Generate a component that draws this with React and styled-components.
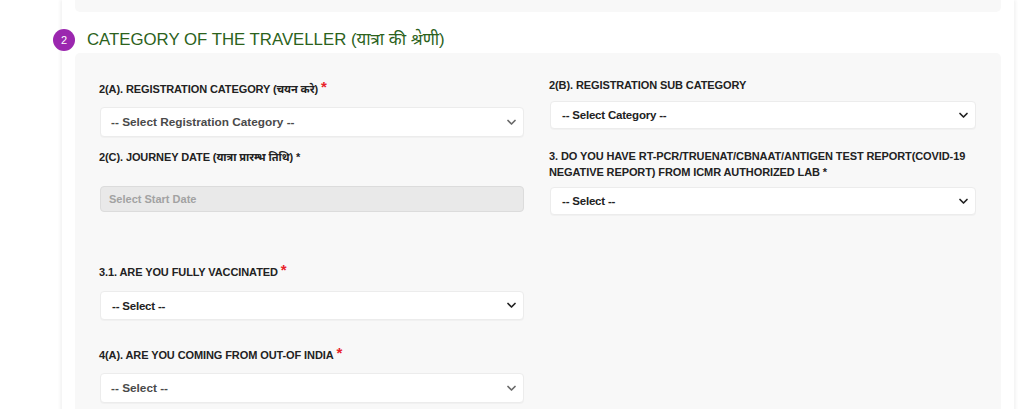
import React from "react";
import styled, { createGlobalStyle } from "styled-components";

const GlobalStyle = createGlobalStyle`
  html, body {
    margin: 0;
    padding: 0;
    background: #ffffff;
    font-family: "Liberation Sans", Arial, "Noto Sans", sans-serif;
  }
`;

const Page = styled.div`
  width: 1024px;
  height: 409px;
  overflow: hidden;
  background: #ffffff;
`;

const Container = styled.div`
  margin-left: 62px;
  width: 952px;
  min-height: 409px;
  padding: 0 13px;
  box-sizing: border-box;
  background: #ffffff;
  box-shadow: -2px 0 3px rgba(0, 0, 0, 0.05), 2px 0 3px rgba(0, 0, 0, 0.05);
`;

const TopPanel = styled.div`
  height: 12px;
  background: #f8f8f8;
  border-radius: 0 0 5px 5px;
`;

const Heading = styled.div`
  display: flex;
  align-items: center;
  gap: 12px;
  margin: 17px 0 0 -22px;
  height: 22px;
`;

const StepBadge = styled.span`
  width: 22px;
  height: 22px;
  border-radius: 50%;
  background: #9b27af;
  color: #ffffff;
  font-size: 11px;
  display: flex;
  align-items: center;
  justify-content: center;
`;

const Title = styled.h2`
  margin: 0;
  font-size: 16.8px;
  font-weight: normal;
  color: #2c621c;
  line-height: 22px;
`;

const Panel = styled.div`
  margin-top: 2px;
  background: #f8f8f8;
  border-radius: 5px 5px 0 0;
  min-height: 360px;
  padding: 0 25px 0 25px;
  display: grid;
  grid-template-columns: 424px 426px;
  column-gap: 26px;
  align-items: start;
`;

const Column = styled.div`
  display: flex;
  flex-direction: column;
`;

const Label = styled.label`
  display: block;
  margin-top: ${(p) => p.$top}px;
  margin-left: -1px;
  font-size: 11px;
  font-weight: bold;
  line-height: 16px;
  color: #222222;
  text-transform: uppercase;
  letter-spacing: -0.1px;
`;

const Required = styled.span`
  color: #e8232a;
  font-size: 15px;
  line-height: 10px;
  margin-left: 3px;
  vertical-align: 1px;
`;

const SelectBox = styled.div`
  margin-top: ${(p) => p.$top}px;
  height: ${(p) => p.$height}px;
  box-sizing: border-box;
  display: flex;
  align-items: center;
  justify-content: space-between;
  padding: 0 4px 0 ${(p) => (p.$muted ? 10 : 11)}px;
  background: #ffffff;
  border: 1px solid #ececec;
  border-radius: 4px;
  box-shadow: 0 1px 1px rgba(0, 0, 0, 0.03);
  color: ${(p) => (p.$muted ? "#4a4a4a" : "#222222")};
  font-size: ${(p) => (p.$muted ? 11.8 : 11.5)}px;
  font-weight: bold;
  letter-spacing: ${(p) => (p.$muted ? "0" : "-0.2px")};
`;

const DateInput = styled.div`
  margin-top: ${(p) => p.$top}px;
  height: 26px;
  box-sizing: border-box;
  display: flex;
  align-items: center;
  padding: 0 8px;
  background: #e9e9e9;
  border: 1px solid #dcdcdc;
  border-radius: 4px;
  color: #a2a2a2;
  font-size: 11px;
  font-weight: bold;
`;

const Chevron = ({ muted }) => (
  <svg width="14" height="7" viewBox="0 0 14 7" aria-hidden="true">
    <path
      d="M3 1.5 L6.5 5 L10 1.5"
      fill="none"
      stroke={muted ? "#6a6a6a" : "#222222"}
      strokeWidth="1.7"
      strokeLinecap="round"
      strokeLinejoin="round"
    />
  </svg>
);

const Select = ({ text, top, height = 30, muted }) => (
  <SelectBox $top={top} $height={height} $muted={muted}>
    <span>{text}</span>
    <Chevron muted={muted} />
  </SelectBox>
);

export default function App() {
  return (
    <Page>
      <GlobalStyle />
      <Container>
        <TopPanel />
        <Heading>
          <StepBadge>2</StepBadge>
          <Title>CATEGORY OF THE TRAVELLER (यात्रा की श्रेणी)</Title>
        </Heading>
        <Panel>
          <Column>
            <Label $top={28}>
              2(A). Registration Category (चयन करे)
              <Required>*</Required>
            </Label>
            <Select top={10} muted text="-- Select Registration Category --" />
            <Label $top={12}>2(C). Journey Date (यात्रा प्रारम्भ तिथि) *</Label>
            <DateInput $top={21}>Select Start Date</DateInput>
            <Label $top={52}>
              3.1. Are you fully vaccinated
              <Required>*</Required>
            </Label>
            <Select top={11} height={29} text="-- Select --" />
            <Label $top={27}>
              4(A). Are you coming from out-of India
              <Required>*</Required>
            </Label>
            <Select top={10} muted text="-- Select --" />
          </Column>
          <Column>
            <Label $top={24}>2(B). Registration Sub Category</Label>
            <Select top={8} height={28} text="-- Select Category --" />
            <Label $top={19}>
              3. Do you have RT-PCR/TRUENAT/CBNAAT/ANTIGEN test report(COVID-19
              negative report) from ICMR authorized lab *
            </Label>
            <Select top={7} height={28} text="-- Select --" />
          </Column>
        </Panel>
      </Container>
    </Page>
  );
}
